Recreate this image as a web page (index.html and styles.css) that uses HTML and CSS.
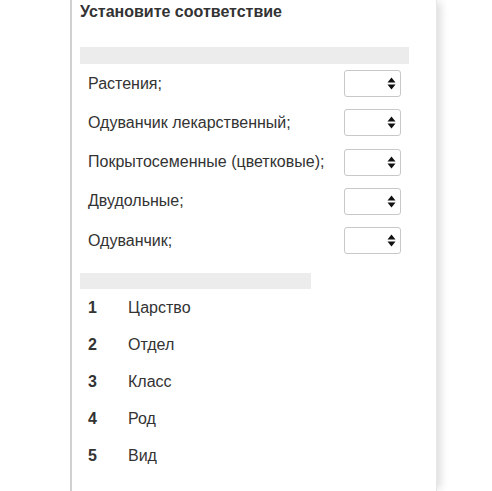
FILE: index.html
```html
<!DOCTYPE html>
<html lang="ru">
<head>
<meta charset="utf-8">
<link rel="stylesheet" href="styles.css">
</head>
<body>
<div class="card">
  <h3 class="title">Установите соответствие</h3>
  <div class="bar bar-wide"></div>
  <div class="rows">
    <div class="row"><span class="label">Растения;</span><span class="select"><svg class="arrows" width="9" height="13" viewBox="0 0 9 13"><path d="M4.5 0.5 L8.5 5.6 L0.5 5.6 Z M0.5 7.4 L8.5 7.4 L4.5 12.5 Z" fill="#111"/></svg></span></div>
    <div class="row"><span class="label">Одуванчик лекарственный;</span><span class="select"><svg class="arrows" width="9" height="13" viewBox="0 0 9 13"><path d="M4.5 0.5 L8.5 5.6 L0.5 5.6 Z M0.5 7.4 L8.5 7.4 L4.5 12.5 Z" fill="#111"/></svg></span></div>
    <div class="row"><span class="label">Покрытосеменные (цветковые);</span><span class="select"><svg class="arrows" width="9" height="13" viewBox="0 0 9 13"><path d="M4.5 0.5 L8.5 5.6 L0.5 5.6 Z M0.5 7.4 L8.5 7.4 L4.5 12.5 Z" fill="#111"/></svg></span></div>
    <div class="row"><span class="label">Двудольные;</span><span class="select"><svg class="arrows" width="9" height="13" viewBox="0 0 9 13"><path d="M4.5 0.5 L8.5 5.6 L0.5 5.6 Z M0.5 7.4 L8.5 7.4 L4.5 12.5 Z" fill="#111"/></svg></span></div>
    <div class="row"><span class="label">Одуванчик;</span><span class="select"><svg class="arrows" width="9" height="13" viewBox="0 0 9 13"><path d="M4.5 0.5 L8.5 5.6 L0.5 5.6 Z M0.5 7.4 L8.5 7.4 L4.5 12.5 Z" fill="#111"/></svg></span></div>
  </div>
  <div class="bar bar-narrow"></div>
  <div class="list">
    <div class="item"><span class="num">1</span><span class="text">Царство</span></div>
    <div class="item"><span class="num">2</span><span class="text">Отдел</span></div>
    <div class="item"><span class="num">3</span><span class="text">Класс</span></div>
    <div class="item"><span class="num">4</span><span class="text">Род</span></div>
    <div class="item"><span class="num">5</span><span class="text">Вид</span></div>
  </div>
</div>
</body>
</html>
```

FILE: styles.css
```css
html, body {
  margin: 0;
  padding: 0;
  background: #fff;
  height: 100%;
}
body {
  font-family: "Liberation Sans", Arial, sans-serif;
  color: #333;
  overflow: hidden;
}
.card {
  margin-left: 70px;
  width: 329px;
  height: 100%;
  border-left: 2px solid #d0d0d0;
  border-right: 1px solid #e6e6e6;
  box-shadow: 6px 0 8px -2px rgba(0,0,0,0.13);
  padding: 0 27px 0 8px;
  box-sizing: content-box;
}
.title {
  margin: 0;
  padding-top: 3px;
  font-size: 16px;
  font-weight: bold;
  line-height: 18px;
  color: #333;
}
.bar {
  background: #ececec;
  height: 16.5px;
}
.bar-wide {
  margin-top: 26px;
  width: 329px;
}
.bar-narrow {
  margin-top: 13px;
  width: 231px;
}
.rows {
  width: 329px;
}
.row {
  height: 39.25px;
  display: flex;
  align-items: center;
  justify-content: space-between;
  padding: 1px 8px 0;
  box-sizing: border-box;
}
.label {
  font-size: 16px;
}
.select {
  width: 57px;
  height: 27px;
  box-sizing: border-box;
  border: 1px solid #c8c8c8;
  border-radius: 3px;
  display: flex;
  align-items: center;
  justify-content: flex-end;
  padding-right: 4px;
}
.arrows {
  display: block;
}
.item {
  height: 37px;
  display: flex;
  align-items: center;
  padding-left: 8px;
  font-size: 16px;
}
.num {
  font-weight: bold;
  width: 40px;
}
```
